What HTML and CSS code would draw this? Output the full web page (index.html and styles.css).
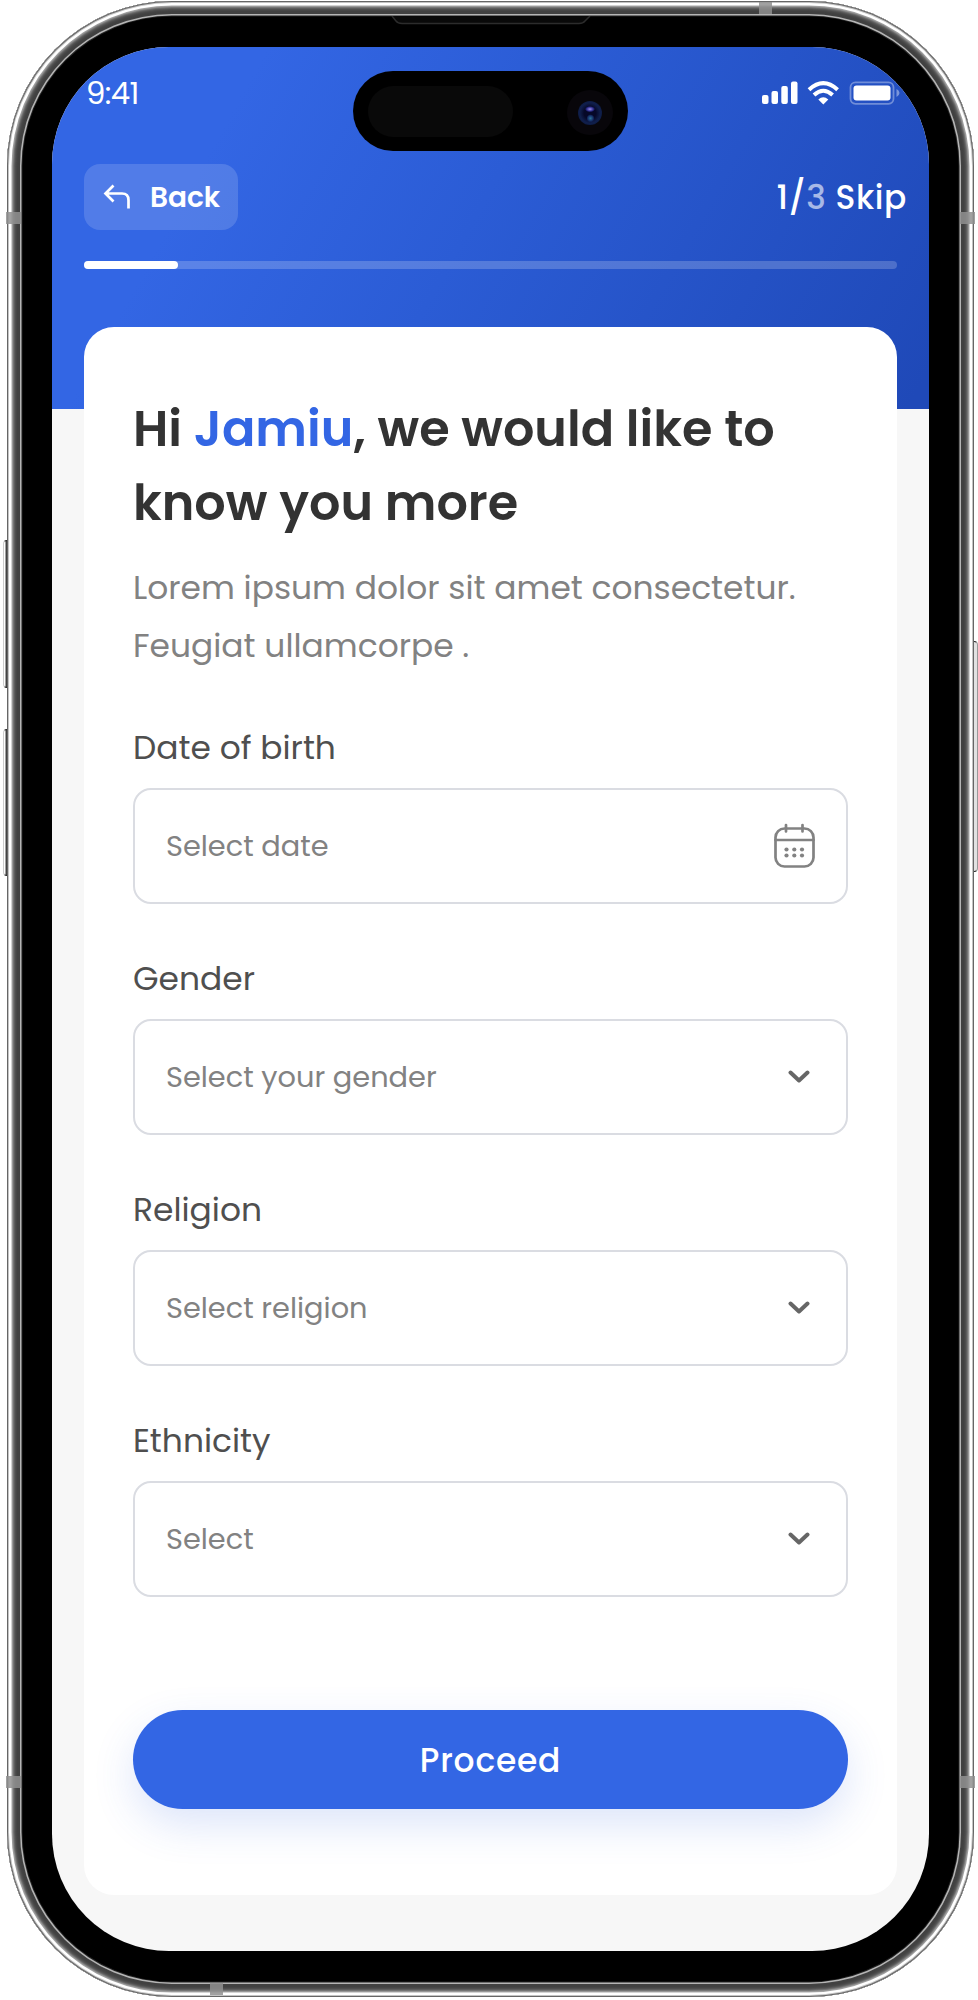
FILE: index.html
```html
<!DOCTYPE html>
<html lang="en">
<head>
<meta charset="utf-8">
<title>Profile setup</title>
<link rel="stylesheet" href="styles.css">
</head>
<body>
<div class="phone">
  <i class="key key-up"></i><i class="key key-down"></i><i class="key key-power"></i>
  <i class="band band-tl"></i><i class="band band-bl"></i><i class="band band-tr"></i><i class="band band-br"></i><i class="band band-top"></i><i class="band band-bottom"></i>
  <svg class="speaker" width="200" height="9" viewBox="0 0 200 9"><path d="M1 0 L5 5 Q7 7.500 11 7.500 H188 Q192 7.500 194 5 L199 0" fill="#090909" stroke="#2c2c2c" stroke-width="1.500"/></svg>
  <main class="screen">
    <div class="island"><span class="sensor"></span><span class="camera"><span class="lens"></span></span></div>
    <header class="top">
      <div class="status">
        <span class="time">9:41</span>
        <svg width="140" height="26" viewBox="0 0 140 26" fill="#fff">
          <rect x="0" y="14" width="6.500" height="9" rx="2"/><rect x="9.500" y="10" width="6.500" height="13" rx="2"/><rect x="19.300" y="5" width="6.500" height="18" rx="2"/><rect x="29" y=".5" width="6.500" height="22.500" rx="2"/>
          <g fill="none" stroke="#fff" stroke-width="4"><path d="M47 8.700 Q61.300 -4.500 75.600 8.700"/><path d="M52 14 Q61.300 5.500 70.600 14"/></g>
          <path d="M56.300 18.400 Q61.300 14.200 66.300 18.400 L61.300 23.500Z"/>
          <rect x="88.500" y="1.300" width="43" height="21.500" rx="5" fill="none" stroke="#fff" stroke-opacity=".35" stroke-width="1.800"/>
          <rect x="91.500" y="4.500" width="37" height="15" rx="3"/>
          <path d="M134.500 8 Q137.500 9.500 137.500 12 T134.500 16Z" fill-opacity=".4"/>
        </svg>
      </div>
      <div class="nav">
        <button class="back"><svg width="28" height="26" viewBox="0 0 28 26" fill="none" stroke="#fff" stroke-width="2.700"><path d="M10.500 1.500 L2.500 9.500 L10.500 17.500 M3 9.500 H19 Q25.500 9.500 25.500 16 V24.500"/></svg><span>Back</span></button>
        <div class="step">1/<span class="total">3</span> Skip</div>
      </div>
      <div class="track"><div class="fill"></div></div>
    </header>
    <section class="card">
      <h1>Hi <span class="name">Jamiu</span>, we would like to<br>know you more</h1>
      <p class="lead">Lorem ipsum dolor sit amet consectetur.<br>Feugiat ullamcorpe .</p>
      <div class="field"><span class="label">Date of birth</span><div class="input"><span>Select date</span>
        <svg width="42" height="46" viewBox="0 0 42 46" fill="none" stroke="#828282" stroke-width="2.700" stroke-linecap="round"><rect x="2.500" y="5.500" width="38" height="38" rx="9"/><path d="M2.500 17 H40.500 M13 2 V8.500 M29.500 2 V8.500"/><g fill="#828282" stroke="none"><circle cx="13.500" cy="26.500" r="2.100"/><circle cx="21.300" cy="26.500" r="2.100"/><circle cx="29" cy="26.500" r="2.100"/><circle cx="13.500" cy="32.500" r="2.100"/><circle cx="21.300" cy="32.500" r="2.100"/><circle cx="29" cy="32.500" r="2.100"/></g></svg></div></div>
      <div class="field"><span class="label">Gender</span><div class="input"><span>Select your gender</span><svg class="chev" width="22" height="14" viewBox="0 0 22 14"><path d="M2.500 2.500 L11 10.500 L19.500 2.500"/></svg></div></div>
      <div class="field"><span class="label">Religion</span><div class="input"><span>Select religion</span><svg class="chev" width="22" height="14" viewBox="0 0 22 14"><path d="M2.500 2.500 L11 10.500 L19.500 2.500"/></svg></div></div>
      <div class="field"><span class="label">Ethnicity</span><div class="input"><span>Select</span><svg class="chev" width="22" height="14" viewBox="0 0 22 14"><path d="M2.500 2.500 L11 10.500 L19.500 2.500"/></svg></div></div>
      <button class="proceed">Proceed</button>
    </section>
  </main>
</div>
</body>
</html>
```

FILE: styles.css
```css
* { box-sizing: border-box; }
html { background: #fff; }
body { margin: 0; height: 2000px; padding: 1px 0 0 7px; overflow: hidden; font-family: Poppins, Inter, "Liberation Sans", sans-serif; }
button { border: 0; font: inherit; color: #fff; margin: 0; }
svg { display: block; flex: none; }
.phone {
  position: relative; width: 967px; height: 1996px; border-radius: 165px; background: #000; padding: 46px 38px 45px 45px;
  box-shadow: inset 0 0 0 1px #666, inset 0 0 0 2px #c4c4c4, inset 0 0 0 4.500px #fff, inset 0 0 2px 6px #aaa, inset 0 0 3px 8px #666, inset 0 0 0 13px #414141, inset 0 0 0 14.500px #b5b5b5, inset 0 0 0 15.500px #222;
}
.key { position: absolute; z-index: -1; width: 8px; border: 1px solid #999; border-top-color: #222; border-bottom-color: #222; }
.key-up, .key-down { left: -4px; border-radius: 4px 0 0 4px; border-left-color: #ccc; background: linear-gradient(90deg, #fff 0 1px, #444 2px 3px); }
.key-up { top: 539px; height: 148px; }
.key-down { top: 728px; height: 147px; }
.key-power { right: -4px; top: 640px; height: 231px; border-radius: 0 4px 4px 0; background: #e2e2e2; }
.band { position: absolute; background: rgba(145, 145, 145, .85); }
.band-tl, .band-bl { left: -1px; width: 15px; height: 12px; }
.band-tr, .band-br { right: -1px; width: 15px; height: 12px; }
.band-tl, .band-tr { top: 211px; }
.band-bl, .band-br { top: 1775px; }
.band-top { left: 752px; top: 1px; width: 13px; height: 12px; }
.band-bottom { left: 203px; bottom: 2px; width: 13px; height: 12px; }
.speaker { position: absolute; left: 384px; top: 15px; }
.screen { position: relative; width: 877px; height: 1904px; border-radius: 117px; overflow: hidden; background: #f7f7f7; }
.top { height: 362px; padding: 34px 32px 0; background: linear-gradient(119deg, #3366e4 20%, #2b5cd5 48%, #1f49b8 98%); color: #fff; }
.status { display: flex; justify-content: space-between; height: 83px; padding-left: 2px; margin-right: -5px; }
.time { font-size: 30.800px; line-height: 26px; letter-spacing: -.600px; }
.nav { display: flex; justify-content: space-between; height: 97px; margin-right: -10px; }
.back { width: 154px; height: 66px; border-radius: 16px; background: rgba(255, 255, 255, .15); padding: 0 0 0 19px; display: flex; align-items: center; gap: 19px; font-size: 28px; font-weight: 600; }
.back span { padding-top: 1px; }
.step { font-size: 32.900px; font-weight: 500; line-height: 68px; letter-spacing: .600px; white-space: nowrap; }
.total { opacity: .6; }
.track { height: 8px; border-radius: 4px; background: rgba(255, 255, 255, .2); }
.fill { width: 94px; height: 8px; border-radius: 4px; background: #fff; }
.island { position: absolute; left: 301px; top: 24px; width: 275px; height: 80px; border-radius: 40px; background: #000; display: flex; align-items: center; justify-content: space-between; padding: 0 15px; }
.sensor { width: 145px; height: 51px; border-radius: 26px; background: #090909; }
.camera { width: 46px; height: 45px; margin-top: 3px; border-radius: 50%; background: #08060a; display: grid; place-items: center; }
.lens { width: 24px; height: 24px; border-radius: 50%; background: radial-gradient(ellipse 5px 3px at 50% 34%, #9a8ee8, #2b2a8a 70%, transparent), radial-gradient(circle 4px at 52% 72%, #2c7398, #142d65 70%, transparent), radial-gradient(circle, #060828 35%, #101f4c 60%, #0a1430); }
.card { position: relative; width: 813px; height: 1568px; margin: -82px 32px 0; border-radius: 30px; background: #fff; padding: 65px 49px 0; }
h1 { margin: 0; font-size: 49.300px; line-height: 74px; font-weight: 600; color: #333; white-space: nowrap; }
.name { color: #3366e4; }
.lead { margin: 19px 0 29px; height: 116px; font-size: 32.900px; line-height: 58px; color: #828282; white-space: nowrap; }
.field { height: 231px; color: #4f4f4f; }
.label { display: block; height: 84px; padding-top: 17px; font-size: 32.900px; line-height: 54px; }
.input { height: 116px; border: 2px solid #dadce2; border-radius: 18px; display: flex; align-items: center; justify-content: space-between; padding: 0 31px; font-size: 28.800px; color: #828282; }
.chev { margin-right: 5px; fill: none; stroke: #666; stroke-width: 4; stroke-linecap: round; stroke-linejoin: round; }
.proceed { display: block; width: 715px; height: 99px; margin-top: 82px; padding: 3px 0 0; border-radius: 50px; background: #3366e4; box-shadow: 0 16px 40px rgba(51, 102, 228, .17); font-size: 32.900px; font-weight: 500; letter-spacing: .800px; }
```
